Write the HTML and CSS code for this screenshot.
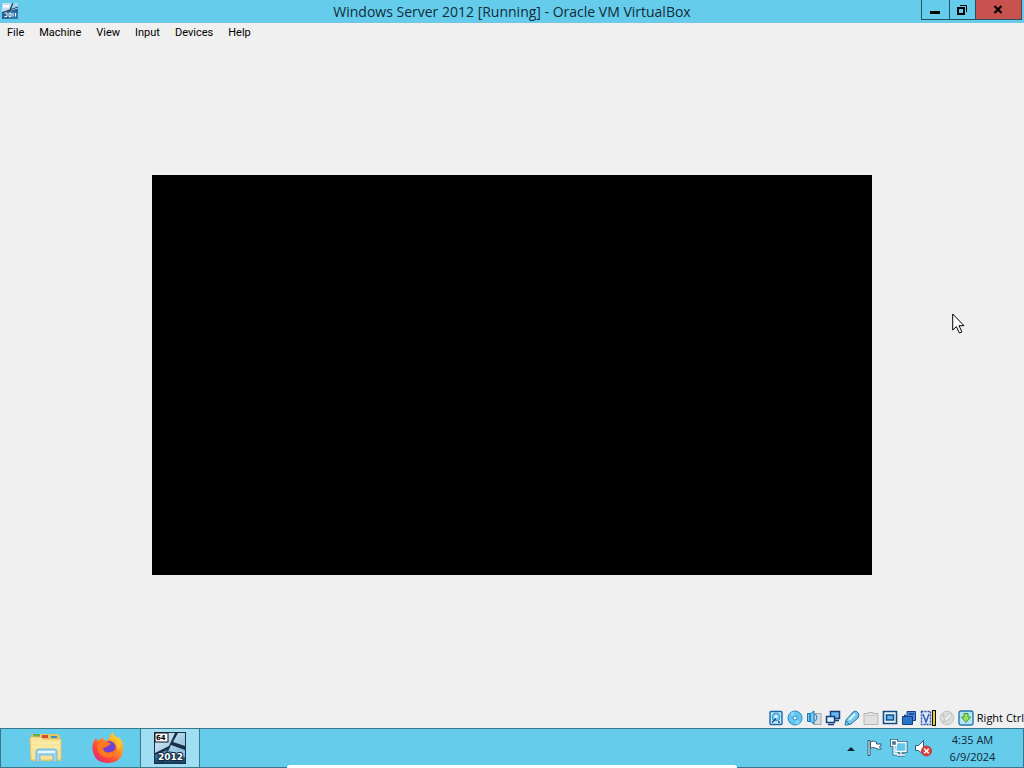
FILE: index.html
```html
<!DOCTYPE html>
<html lang="en">
<head>
<meta charset="utf-8">
<title>Windows Server 2012 [Running] - Oracle VM VirtualBox</title>
<link rel="stylesheet" href="styles.css">
</head>
<body>
<div class="desktop">
  <header class="titlebar">
    <svg class="app-icon" viewBox="0 0 32 32" aria-hidden="true"><rect width="32" height="32" fill="#2b618f"/><path d="M0 0h20l-5 14L0 19z" fill="#c5dfef"/><path d="M22 0h10v11l-14 4z" fill="#a4d4f0"/><path d="M18 16l14 4v12H2z" fill="#3478ac"/><path d="M0 19L32 8M22 0L9 32" stroke="#234765" stroke-width="2"/><path d="M2 4h12v5H2z" fill="#fff"/><path d="M5 20h5v7H5m9-7h4v7h-4zm8 0v7m5-7v7" fill="none" stroke="#f3faff" stroke-width="2"/></svg>
    <h1 class="title">Windows Server 2012 [Running] - Oracle VM VirtualBox</h1>
    <div class="window-controls">
      <button class="control minimize" aria-label="Minimize"><svg width="12" height="12" viewBox="0 0 12 12"><path d="M1 7h10v3H1z"/></svg></button>
      <button class="control restore" aria-label="Restore"><svg width="12" height="12" viewBox="0 0 12 12"><path d="M2 4h6v6H2z" fill="none" stroke="#000" stroke-width="2"/><path d="M4 1.5h6.5V8" fill="none" stroke="#000"/></svg></button>
      <button class="control close" aria-label="Close"><svg width="10" height="10" viewBox="0 0 10 10"><path d="M1.5 1l7 7m0-7l-7 7" stroke="#000" stroke-width="2.2"/></svg></button>
    </div>
  </header>
  <nav class="menubar" aria-label="Application menu">
    <button>File</button><button>Machine</button><button>View</button><button>Input</button><button>Devices</button><button>Help</button>
  </nav>
  <main class="workspace">
    <div class="guest-screen"></div>
    <svg class="cursor" width="13" height="22" viewBox="0 0 13 22" aria-hidden="true"><path d="M.7 1v16l3.7-3.4 3 6.4 2.5-1.1-2.9-6.2h5z" fill="#fff" stroke="#000"/></svg>
  </main>
  <footer class="statusbar">
    <button aria-label="Hard disks"><svg viewBox="0 0 16 16"><rect x="2" y="1.5" width="12" height="13" rx="1" fill="#cceeff" stroke="#1767a8" stroke-width="1.4"/><circle cx="8" cy="7" r="4" fill="#6dc9f5" stroke="#3b9bd0"/><circle cx="8" cy="6.5" r="1.5" fill="#fff"/><path d="M4 12.5l4-4M10 12h2" stroke="#16467d" stroke-width="1.3"/></svg></button>
    <button aria-label="Optical drives"><svg viewBox="0 0 16 16"><circle cx="8" cy="8" r="7" fill="#65c6f4" stroke="#2289c4"/><path d="M8 8L3 3.5a7 7 0 0 1 4-2zm0 0l5 4.5a7 7 0 0 1-4 2z" fill="#8bd7fa"/><circle cx="8" cy="8" r="2" fill="#fff" stroke="#2289c4"/></svg></button>
    <button aria-label="Audio"><svg viewBox="0 0 16 16"><rect x="8" y="3.5" width="7" height="11" fill="#d7dce0" stroke="#a3a9ad"/><path d="M1.5 3.5H4v8H1.5zM4 4l4-3v13l-4-3z" fill="#77cef5" stroke="#1879b5"/><path d="M9.5 4q3 3.5 0 7" fill="none" stroke="#1879b5"/></svg></button>
    <button aria-label="Network"><svg viewBox="0 0 16 16"><path d="M5.5 1.5h9v7h-9z" fill="#69b9ef" stroke="#173f77" stroke-width="1.5"/><path d="M8 10.5h6" stroke="#173f77" stroke-width="1.5"/><path d="M1.5 6.5h8v6h-8z" fill="#d8efff" stroke="#173f77" stroke-width="1.5"/><path d="M3 14.5h6" stroke="#173f77" stroke-width="1.5"/></svg></button>
    <button aria-label="USB"><svg viewBox="0 0 16 16"><path d="M1 15l1-5 7-8 3-1 3 3-1 4-7 6-4 1z" fill="#77c8f1" stroke="#28759f"/><path d="M2 11l3 3" stroke="#277ba9"/><path d="M5 10l6-6" stroke="#d8f5ff" stroke-width="2"/></svg></button>
    <button aria-label="Shared folders"><svg viewBox="0 0 16 16"><path d="M1 3.5h4v-1h5v1h5v11H1z" fill="#e0e0e0" stroke="#b7b7b7"/><path d="M2 5.5h12" stroke="#ccc"/></svg></button>
    <button aria-label="Display"><svg viewBox="0 0 16 16"><path d="M1.5 1.5h13v12h-13z" fill="#e9f8ff" stroke="#164c83" stroke-width="1.6"/><path d="M4.5 5h7v5h-7z" fill="#5dbcf0" stroke="#164c83" stroke-width="1.5"/></svg></button>
    <button aria-label="Recording"><svg viewBox="0 0 16 16"><path d="M6 1.5h8.5v9H6z" fill="#4e8ddd" stroke="#163d84"/><path d="M1.5 6.5h10v8h-10z" fill="#2875c8" stroke="#163d84"/><path d="M3 5.5h2M8 4h5" stroke="#163d84" stroke-width="1.5"/></svg></button>
    <button aria-label="Virtual processor"><svg viewBox="0 0 16 16"><path d="M1.5 1.5h9v13h-9z" fill="#dcecff" stroke="#294c9e" stroke-width="1.5" stroke-dasharray="2 1"/><path d="M3 4l3 8 3-8" fill="none" stroke="#385caf" stroke-width="1.5"/><path d="M12 0h4v16h-4z" fill="#111"/><path d="M13 1h2v14h-2z" fill="#e8d321"/></svg></button>
    <button aria-label="Mouse integration"><svg viewBox="0 0 16 16"><circle cx="8" cy="8" r="6.8" fill="#ddd" stroke="#c3c3c3"/><path d="M3 4l4 3 4-4 2 2-4 5-5 3 2-4z" fill="#eee" stroke="#c2c2c2"/></svg></button>
    <button aria-label="Keyboard capture"><svg viewBox="0 0 16 16"><rect x="1" y="1" width="14" height="14" rx="2" fill="#b4e4fa" stroke="#2679aa" stroke-width="1.4"/><path d="M6 3.5h4V7h2.5L8 12.5 3.5 7H6z" fill="#94e65a" stroke="#439936"/></svg></button>
    <span class="host-key">Right Ctrl</span>
  </footer>
  <footer class="taskbar">
    <div class="launchers">
      <button class="launcher explorer" aria-label="File Explorer"><svg width="34" height="32" viewBox="0 0 34 32"><path d="M2 4q0-2 2-2h25l2 2v25H2z" fill="#e6c65d"/><path d="M4 2h7v3H4z" fill="#68ad59"/><path d="M13 3h6v3h-6z" fill="#d84835"/><path d="M22 4h6v2h-6z" fill="#3a91c8"/><path d="M1 7q0-2 2-2h9l2 2h18v21H2z" fill="#f8e59b" stroke="#e0c267"/><path d="M3 11h28M3 15h28" stroke="#fff0b4"/><path d="M7 30V20q0-3 3-3h15q3 0 3 3v10h-4v-7H11v7z" fill="#9bd6ef" stroke="#77b7d4"/><path d="M9 20h17" stroke="#e3faff" stroke-width="2"/></svg></button>
      <button class="launcher firefox" aria-label="Firefox"><svg width="32" height="32" viewBox="0 0 32 32"><defs><linearGradient id="flame" x1="1" y1="0" x2=".2" y2="1"><stop stop-color="#fff34f"/><stop offset=".4" stop-color="#ff9b20"/><stop offset=".72" stop-color="#ff4a38"/><stop offset="1" stop-color="#e5257b"/></linearGradient></defs><path d="M4 6l2 3 5-4 1 4 5-2q0-4 4-7 0 4 4 7l2-2q5 5 4 13-1 12-14 13Q4 32 1 20-1 12 4 6z" fill="url(#flame)"/><circle cx="17" cy="16" r="7" fill="#7540cf"/><path d="M7 11q5-4 9-1l3 2-5 3-3 1q1 6 8 4 5-1 5-6 2 7-3 10-7 4-13-2-4-4-2-11z" fill="#ff781f"/><path d="M18 7q5-1 7 5l1 6 3-5q-1-6-7-10z" fill="#ffc52e"/></svg></button>
      <button class="launcher active" aria-label="Windows Server 2012"><svg width="32" height="32" viewBox="0 0 32 32"><defs><linearGradient id="glass" x1="0" y1="0" x2="1" y2="1"><stop stop-color="#d7edf8"/><stop offset="1" stop-color="#7db5d7"/></linearGradient><linearGradient id="pane" x1="0" y1="0" x2="0" y2="1"><stop stop-color="#579ac7"/><stop offset="1" stop-color="#183e63"/></linearGradient></defs><rect width="32" height="32" fill="#183149"/><path d="M1 1h20l-6 13L1 21zM24 1h7v13l-12-4zM17 13l14 5v10l-18-6z" fill="url(#glass)"/><path d="M1 23l12-5-6 13H1zM14 18l17 7v6H9z" fill="url(#pane)"/><rect x="1" y="1" width="13" height="9" fill="#fff" stroke="#111"/><text class="bits" x="2" y="8">64</text><text class="version" x="4" y="28">2012</text></svg></button>
    </div>
    <div class="tray">
      <button class="expand" aria-label="Show hidden icons"><svg width="8" height="5" viewBox="0 0 8 5"><path d="M0 5l4-4 4 4z" fill="#12232d"/></svg></button>
      <button aria-label="Action Center"><svg viewBox="0 0 18 18"><path d="M2 1.5h2v15H2zM4.500 3q3-2 6 0v2h5l-2 3 2 2q-4 1-6-1-3-1-5 0z" fill="#fff" stroke="#315d76"/></svg></button>
      <button aria-label="Network status"><svg viewBox="0 0 18 18"><path d="M6 3.5h10v9H6zM11 12.5v3M7 16h8M1.5 1.5h5v5h-5zM4 7v8h4" fill="none" stroke="#315d76" stroke-width="3"/><path d="M6 3.5h10v9H6zM11 12.5v3M7 16h8M4 7v8h4" fill="#65c7ec" stroke="#fff" stroke-width="1.3"/><path d="M1.5 1.5h5v5h-5z" fill="#47788e" stroke="#fff" stroke-width="1.3"/></svg></button>
      <button aria-label="Volume muted"><svg viewBox="0 0 18 18"><path d="M1.5 6.5h3l5-5v14l-5-4h-3z" fill="#fff" stroke="#315d76"/><circle cx="12.5" cy="12" r="5" fill="#df3e35" stroke="#b83c35"/><path d="M10.2 9.7l4.6 4.6m0-4.6l-4.6 4.6" stroke="#fff" stroke-width="1.6"/></svg></button>
      <button class="clock"><time datetime="2024-06-09T04:35">4:35 AM<br>6/9/2024</time></button>
    </div>
    <div class="bottom-panel" aria-hidden="true"></div>
  </footer>
</div>
</body>
</html>
```
FILE: styles.css
```css
* { box-sizing: border-box; }
body { margin: 0; font-family: "Open Sans", "Noto Sans", sans-serif; color: #000; }
button { margin: 0; padding: 0; border: 0; background: transparent; color: inherit; font: inherit; }
svg { display: block; flex: none; }
.desktop { min-height: 100vh; display: flex; flex-direction: column; background: #f0f0f0; }
.titlebar { height: 23px; display: grid; grid-template-columns: 103px 1fr 103px; background: #66ccec; border-bottom: 1px solid #75c5df; }
.app-icon { width: 16px; height: 16px; margin: 3px 0 0 2px; }
.title { margin: 0; text-align: center; font-size: 14px; line-height: 23px; font-weight: 400; white-space: nowrap; color: #102d38; }
.window-controls { height: 20px; display: flex; padding-right: 2px; }
.control { display: grid; place-items: center; border: 1px solid #245060; border-top: 0; border-right: 0; }
.control svg { margin-right: 2px; }
.minimize { width: 28px; }
.restore { width: 26px; }
.close { width: 47px; background: #c75250; border-right: 1px solid #633a3b; }
.menubar { height: 20px; display: flex; gap: 15px; padding: 0 7px; font-family: Roboto, sans-serif; font-size: 11px; line-height: 20px; }
.workspace { flex: 1; position: relative; display: grid; place-items: center; padding: 24px; }
.guest-screen { width: 74%; max-width: 720px; aspect-ratio: 9 / 5; background: #000; }
.cursor { position: absolute; left: 93%; top: 270px; }
.statusbar { height: 21px; display: flex; align-items: center; justify-content: flex-end; gap: 3px; font-size: 11px; }
.statusbar svg { width: 16px; height: 16px; }
.taskbar { height: 40px; position: relative; display: flex; justify-content: space-between; background: #66ccec; border: 1px solid #39778b; }
.launchers { display: flex; }
.launcher { display: grid; place-items: center; border: 0 solid #39778b; }
.explorer { width: 90px; }
.firefox { width: 34px; margin-right: 15px; }
.active { width: 60px; border-width: 0 1px; background: #a0dff3; }
.bits { font: bold 7px "DejaVu Sans", sans-serif; }
.version { font: bold 9px "DejaVu Sans", sans-serif; fill: #fff; stroke: #102940; stroke-width: 2px; paint-order: stroke; }
.tray { display: flex; align-items: center; gap: 6px; padding-right: 16px; }
.tray svg { width: 18px; height: 18px; }
.tray .expand { margin-right: 5px; }
.tray .expand svg { width: 8px; height: 5px; }
.clock { width: 69px; text-align: center; font-size: 11px; line-height: 17px; color: #0d2631; }
.bottom-panel { position: absolute; left: 28%; right: 28%; bottom: -1px; height: 3px; border-radius: 4px 4px 0 0; background: #fff; }
```
